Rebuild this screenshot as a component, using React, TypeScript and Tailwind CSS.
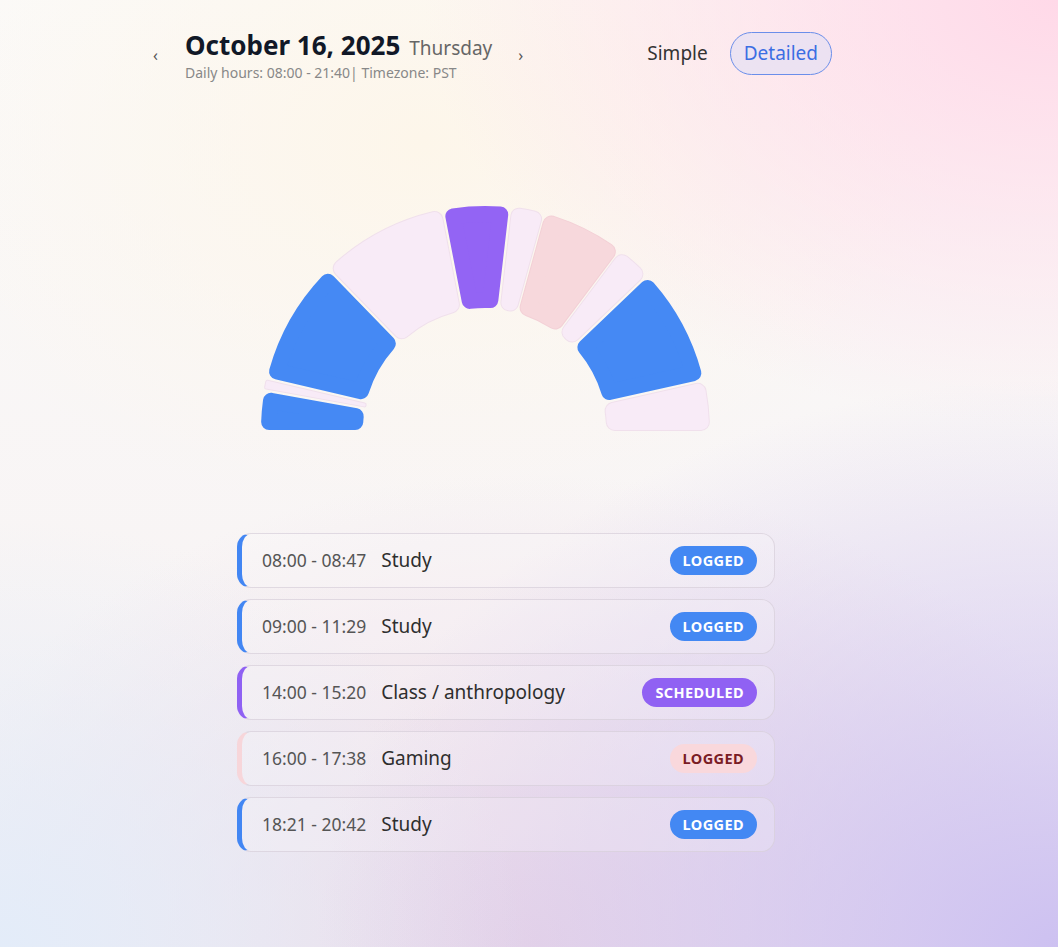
import React from "react";

const CX = 235;
const CY = 232;
const RIN = 122;
const ROUT = 224;
const TOTAL = 820;

type Seg = { s: number; e: number; fill: string; border?: string };

const segs: Seg[] = [
  { s: 0, e: 47, fill: "#4589f4" },
  { s: 47, e: 60, fill: "#f8ebf7", border: "#f0e0ec" },
  { s: 60, e: 209, fill: "#4589f4" },
  { s: 209, e: 360, fill: "#f8ebf7", border: "#f0e0ec" },
  { s: 360, e: 440, fill: "#9364f4" },
  { s: 440, e: 480, fill: "#f8ebf7", border: "#f0e0ec" },
  { s: 480, e: 578, fill: "#f7d8dc", border: "#f3d0d6" },
  { s: 578, e: 621, fill: "#f8ebf7", border: "#f0e0ec" },
  { s: 621, e: 762, fill: "#4589f4" },
  { s: 762, e: 820, fill: "#f8ebf7", border: "#f0e0ec" },
];

function pt(R: number, th: number) {
  return [CX + R * Math.cos(th), CY - R * Math.sin(th)];
}

function sector(s: number, e: number) {
  const t0 = (s / TOTAL) * Math.PI;
  const t1 = (e / TOTAL) * Math.PI;
  const th0 = Math.PI - t0;
  const th1 = Math.PI - t1;
  const gap = 1.6;
  const d0 = s === 0 ? 0 : gap;
  const d1 = e === TOTAL ? 0 : gap;
  const span = t1 - t0;
  let r = Math.min(8, (RIN * span - d0 - d1) / 2 - 0.3, (ROUT - RIN) / 2 - 1);
  r = Math.max(r, 0.6);
  const ro = ROUT - r;
  const ri = RIN + r;
  const a0o = th0 - Math.asin((d0 + r) / ro);
  const a1o = th1 + Math.asin((d1 + r) / ro);
  const a0i = th0 - Math.asin((d0 + r) / ri);
  const a1i = th1 + Math.asin((d1 + r) / ri);
  const [x0, y0] = pt(ro, a0o);
  const [x1, y1] = pt(ro, a1o);
  const [x2, y2] = pt(ri, a1i);
  const [x3, y3] = pt(ri, a0i);
  const large = a0o - a1o > Math.PI ? 1 : 0;
  const d = `M${x0.toFixed(2)} ${y0.toFixed(2)} A${ro} ${ro} 0 ${large} 1 ${x1.toFixed(2)} ${y1.toFixed(2)} L${x2.toFixed(2)} ${y2.toFixed(2)} A${ri} ${ri} 0 0 0 ${x3.toFixed(2)} ${y3.toFixed(2)} Z`;
  return { d, r };
}

function Chart() {
  return (
    <svg width={470} height={236} viewBox="0 0 470 236" className="block">
      {segs.map((g, i) => {
        const { d, r } = sector(g.s, g.e);
        return (
          <g key={i}>
            {g.border && (
              <path d={d} fill={g.border} stroke={g.border} strokeWidth={2 * r + 2} strokeLinejoin="round" />
            )}
            <path d={d} fill={g.fill} stroke={g.fill} strokeWidth={2 * r} strokeLinejoin="round" />
          </g>
        );
      })}
    </svg>
  );
}

type Row = { time: string; title: string; status: string; kind: "blue" | "purple" | "pink" };

const rows: Row[] = [
  { time: "08:00 - 08:47", title: "Study", status: "LOGGED", kind: "blue" },
  { time: "09:00 - 11:29", title: "Study", status: "LOGGED", kind: "blue" },
  { time: "14:00 - 15:20", title: "Class / anthropology", status: "SCHEDULED", kind: "purple" },
  { time: "16:00 - 17:38", title: "Gaming", status: "LOGGED", kind: "pink" },
  { time: "18:21 - 20:42", title: "Study", status: "LOGGED", kind: "blue" },
];

function ListRow({ row }: { row: Row }) {
  const accent =
    row.kind === "blue"
      ? "border-l-[#4286f3]"
      : row.kind === "purple"
      ? "border-l-[#8f61f3]"
      : "border-l-[#f7d6da]";
  const badge =
    row.kind === "blue"
      ? "bg-[#4388f3] text-white"
      : row.kind === "purple"
      ? "bg-[#9061f3] text-white"
      : "bg-[#f9d8dc] text-[#7a1c25]";
  return (
    <div
      className={`flex h-[55px] items-center justify-between rounded-[14px] border border-[#d6cdd9]/70 border-l-[5px] ${accent} bg-white/20 pl-[20px] pr-[17px]`}
    >
      <div className="flex items-baseline gap-[15px]">
        <span className="text-[17.5px] text-[#555]">{row.time}</span>
        <span className="text-[19px] font-normal text-[#2e2e2e]">{row.title}</span>
      </div>
      <span
        className={`flex h-[29px] items-center rounded-full px-[13px] text-[14.5px] font-bold tracking-[0.4px] ${badge}`}
      >
        {row.status}
      </span>
    </div>
  );
}

export default function App() {
  return (
    <div
      className="min-h-[947px] w-full bg-[radial-gradient(ellipse_60%_45%_at_100%_0%,#ffd9e8_0%,transparent_100%),radial-gradient(ellipse_70%_60%_at_100%_100%,#cdc1f1_0%,transparent_100%),radial-gradient(ellipse_50%_45%_at_0%_100%,#e3ecf9_0%,transparent_100%),radial-gradient(ellipse_60%_50%_at_50%_100%,#ead7e6_0%,transparent_100%),radial-gradient(ellipse_50%_40%_at_40%_15%,#fdf6ea_0%,transparent_100%),linear-gradient(180deg,#fbfaf9,#f6f1f2)]"
      style={{ fontFamily: '"Noto Sans", "Open Sans", sans-serif' }}
    >
      <div className="ml-[148px] w-[684px] pt-[31px]">
        <div className="flex h-[44px] items-center justify-between">
          <div className="flex items-center">
            <span className="w-[37px] pl-[5px] pt-[4px] text-[16px] text-[#555]">‹</span>
            <div className="flex flex-col pt-[6px]">
              <div className="flex items-baseline gap-[9px] leading-none">
                <span className="text-[26px] font-bold text-[#111827]">October 16, 2025</span>
                <span className="text-[19px] text-[#666]">Thursday</span>
              </div>
              <span className="mt-[8px] text-[14px] leading-none text-[#888]">
                Daily hours: 08:00 - 21:40| Timezone: PST
              </span>
            </div>
            <span className="ml-[26px] pt-[4px] text-[16px] text-[#555]">›</span>
          </div>
          <div className="flex items-center gap-[22px]">
            <span className="text-[19px] text-[#333]">Simple</span>
            <span className="flex h-[43px] items-center rounded-full border border-[#6a8eea] bg-[#e4e0f4]/70 px-[13px] text-[19px] text-[#3b6ee3]">
              Detailed
            </span>
          </div>
        </div>

        <div className="ml-[102px] mt-[123px]">
          <Chart />
        </div>

        <div className="ml-[89px] mt-[99px] flex w-[538px] flex-col gap-[11px]">
          {rows.map((r, i) => (
            <ListRow key={i} row={r} />
          ))}
        </div>
      </div>
    </div>
  );
}
